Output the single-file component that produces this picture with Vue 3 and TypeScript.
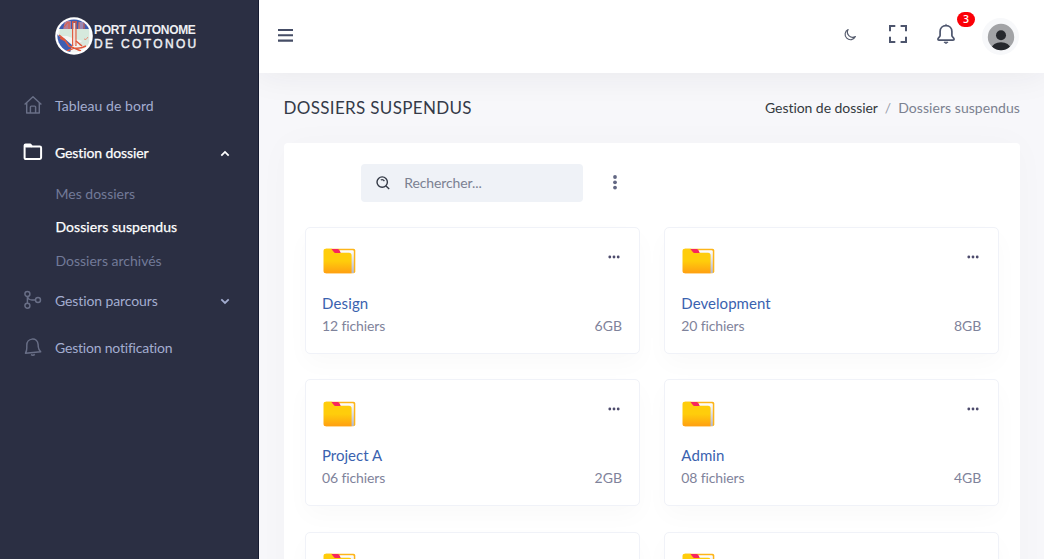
<script setup lang="ts">
interface Folder {
  name: string
  files: string
  size: string
  tone: string
}

const folders: Folder[] = [
  { name: 'Design', files: '12 fichiers', size: '6GB', tone: 'n-design' },
  { name: 'Development', files: '20 fichiers', size: '8GB', tone: 'n-dev' },
  { name: 'Project A', files: '06 fichiers', size: '2GB', tone: 'n-project' },
  { name: 'Admin', files: '08 fichiers', size: '4GB', tone: 'n-admin' },
  { name: '', files: '', size: '', tone: '' },
  { name: '', files: '', size: '', tone: '' },
]
</script>

<template>
  <div class="app">
    <aside class="sidebar">
      <div class="brand">
        <svg class="crest" width="38" height="38" viewBox="0 0 38 38">
          <defs>
            <clipPath id="crest-clip"><circle cx="19" cy="19" r="16.6" /></clipPath>
          </defs>
          <circle cx="19" cy="19" r="18.8" fill="#fff" />
          <g clip-path="url(#crest-clip)">
            <rect width="38" height="38" fill="#f3f5f3" />
            <path d="M0 0H38V12H0Z" fill="#3e5eb2" />
            <path d="M10 4H16V13H8Z" fill="#b67c96" />
            <path d="M24 5H29L28 12H23Z" fill="#9a88b2" />
            <path d="M5 12H34V22L28 24L20 22L12 19H4Z" fill="#d6e9dd" />
            <path d="M0 15L4 19L10 22L17 28L15 36H0Z" fill="#3e5eb2" />
            <path d="M24 26L34 20V29H24Z" fill="#d9e8de" />
            <path d="M9 10L13 5M14 5V12M24 5V12M29 6V12" stroke="#db6045" stroke-width="1.1" />
            <path d="M17.7 4.5V29M20.9 4.5V29M17 4.8H22" stroke="#e2583a" stroke-width="1.3" fill="none" />
            <path d="M19.3 6V28" stroke="#f4ddd6" stroke-width="1.8" />
            <path d="M4 18L9 22L14 29L19 31Q25 32 31 29M5 21L11 24M21 24L27 29M12 34L19 31L26 34" stroke="#e0573a" stroke-width="1.6" fill="none" />
            <path d="M29 22Q31 24 33 20" stroke="#e7917d" fill="none" />
          </g>
        </svg>
        <div class="brand-text">
          <span class="brand-a">PORT AUTONOME</span>
          <span class="brand-b">DE COTONOU</span>
        </div>
      </div>

      <nav>
        <a class="item">
          <svg class="nav-icon" viewBox="0 0 20 20"><path d="M1.6 9.5L10 1.8L18.4 9.5M3.7 8V17.9H16.3V8M7.4 17.6V12Q7.4 11.1 8.3 11.1H11.7Q12.6 11.1 12.6 12V17.6" /></svg>
          <span class="t-home">Tableau de bord</span>
        </a>
        <a class="item active">
          <svg class="nav-icon folder-outline" viewBox="0 0 20 20"><path d="M1.6 16V3.4Q1.6 2.5 2.6 2.5H7.2L9 4.5H16.8Q18.1 4.5 18.1 5.8V15.6Q18.1 17 16.8 17H2.9Q1.6 17 1.6 15.8Z" /><path d="M2.8 3.4H7.2L8.1 4.5H2.8Z" /></svg>
          <span class="t-folder">Gestion dossier</span>
          <svg class="caret" viewBox="0 0 12 12"><path d="M2.3 8.6L6 4.9L9.7 8.6" /></svg>
        </a>
        <div class="sub">
          <a>Mes dossiers</a>
          <a class="current">Dossiers suspendus</a>
          <a>Dossiers archivés</a>
        </div>
        <a class="item">
          <svg class="nav-icon" viewBox="0 0 20 20"><circle cx="4.4" cy="4" r="2.5" /><circle cx="4.4" cy="15.8" r="2.5" /><circle cx="15" cy="9.9" r="2.5" /><path d="M4.4 6.7V13.1M4.8 7Q5.3 9.9 9 9.9H12.3" /></svg>
          <span class="t-path">Gestion parcours</span>
          <svg class="caret" viewBox="0 0 12 12"><path d="M2.3 4.3L6 8L9.7 4.3" /></svg>
        </a>
        <a class="item">
          <svg class="nav-icon" viewBox="0 0 20 20"><path d="M2.5 16.2Q3.9 13.9 3.8 10.8V8.2C3.8 4.9 6 2.4 9 2.1C12.4 1.8 14.8 4 15.1 7.4L15.3 10Q15.6 12.9 17.7 14.8ZM8 17.7Q10 18.9 11.8 17.4" /></svg>
          <span class="t-notif">Gestion notification</span>
        </a>
      </nav>
    </aside>

    <div class="page">
      <header class="topbar">
        <svg class="burger" width="16" height="14" viewBox="0 0 16 14"><path d="M0 2H15M0 7.2H15M0 12.6H15" stroke="#454d66" stroke-width="2.1" /></svg>
        <div class="tools">
          <svg class="moon" width="14" height="14" viewBox="0 0 14 14"><path d="M5.1 1.5A5.4 5.4 0 1 0 12.4 8.6A5.3 5.3 0 0 1 5.1 1.5Z" fill="none" stroke="#555b6d" stroke-width="1.15" stroke-linejoin="round" /></svg>
          <svg class="expand" width="20" height="20" viewBox="0 0 20 20"><path d="M2 7.2V2H7.3M12.6 2H18V7.2M18 12.7V18H12.6M7.3 18H2V12.7" fill="none" stroke="#4d556d" stroke-width="2" /></svg>
          <div class="alerts">
            <svg width="20" height="22" viewBox="0 0 20 22"><path d="M10 2.7C6.4 2.7 4.1 5.2 4.1 8.5V12.5C4.1 14.2 1.9 14.6 1.9 16.2Q1.9 17.1 3 17.1H17Q18.1 17.1 18.1 16.2C18.1 14.6 15.9 14.2 15.9 12.5V8.5C15.9 5.2 13.6 2.7 10 2.7Z" fill="none" stroke="#4d556d" stroke-width="1.7" /><path d="M10 .9V3M8 19.2H12Q11.4 20.3 10 20.3T8 19.2Z" fill="#4d556d" stroke="#4d556d" stroke-width=".9" /></svg>
            <span class="badge">3</span>
          </div>
          <div class="avatar">
            <svg width="28" height="28" viewBox="0 0 28 28">
              <defs><clipPath id="avatar-clip"><circle cx="14" cy="14" r="13.2" /></clipPath></defs>
              <circle cx="14" cy="14" r="13.2" fill="#a2a3a6" />
              <g clip-path="url(#avatar-clip)" fill="#26282d"><circle cx="14" cy="12.2" r="5" /><ellipse cx="14" cy="25.2" rx="9.3" ry="6" /></g>
            </svg>
          </div>
        </div>
      </header>

      <main>
        <div class="heading">
          <h1>DOSSIERS SUSPENDUS</h1>
          <div class="crumbs"><span class="crumb-a">Gestion de dossier</span><span class="slash">/</span><span class="crumb-b">Dossiers suspendus</span></div>
        </div>

        <section class="panel">
          <div class="toolbar">
            <label class="search">
              <svg width="14" height="14" viewBox="0 0 14 14"><circle cx="6.2" cy="6.1" r="5.2" fill="none" stroke="#343a46" stroke-width="1.4" /><path d="M10 10L13.2 13M4.8 4Q6.9 2.9 8.4 5.1" fill="none" stroke="#343a46" stroke-width="1.4" /></svg>
              <span>Rechercher...</span>
            </label>
            <svg class="kebab" width="6" height="16" viewBox="0 0 6 16" fill="#626783"><circle cx="3" cy="3" r="1.9" /><circle cx="3" cy="8.3" r="1.9" /><circle cx="3" cy="13.6" r="1.9" /></svg>
          </div>

          <div class="grid">
            <article v-for="(folder, i) in folders" :key="i" class="card">
              <div class="card-top">
                <svg class="folder" width="33" height="26" viewBox="0 0 33 26">
                  <defs>
                    <linearGradient :id="'face' + i" x2="0" y2="1"><stop offset=".5" stop-color="#ffcd0b" /><stop offset="1" stop-color="#ff9f12" /></linearGradient>
                    <linearGradient :id="'paper' + i" x2="0" y2="1"><stop stop-color="#fff" /><stop offset="1" stop-color="#b4b8cc" /></linearGradient>
                  </defs>
                  <path d="M3 .7H30.5Q32.3 .7 32.3 2.5V23.5Q32.3 25.3 30.3 25.3H3Z" fill="#fdb51a" />
                  <path d="M16 2.2H29.5Q30.8 2.2 30.8 3.4V25H19Z" :fill="'url(#paper' + i + ')'" />
                  <path d="M2.5 .7H9L11.6 3.6Q12.7 4.7 14 4.7H26Q28.6 4.7 28.6 7.5V25.3H2.5Q.5 25.3 .5 23.3V2.7Q.5 .7 2.5 .7Z" :fill="'url(#face' + i + ')'" />
                  <path d="M8.4 1H14.6Q16 1 16.9 3L17.7 4.9H12.5Q11.3 4.9 10.6 3.7Z" fill="#f7255d" />
                </svg>
                <svg class="dots" width="12" height="4" viewBox="0 0 12 4" fill="#4d4b6c"><circle cx="1.8" cy="2" r="1.4" /><circle cx="6" cy="2" r="1.4" /><circle cx="10.2" cy="2" r="1.4" /></svg>
              </div>
              <h2><span :class="folder.tone">{{ folder.name }}</span></h2>
              <div class="meta"><span class="files">{{ folder.files }}</span><span>{{ folder.size }}</span></div>
            </article>
          </div>
        </section>
      </main>
    </div>
  </div>
</template>

<style>
html, body { margin: 0; background: #fff; overflow: hidden; }
</style>

<style scoped>
* { box-sizing: border-box; }
.app { display: flex; width: 1044px; height: 559px; overflow: hidden; font-family: "Lato", "Open Sans", sans-serif; font-size: 14px; font-variant-ligatures: none; background: #f7f7fa; }
svg { display: block; flex: none; }
span, a { white-space: nowrap; }

.sidebar { position: relative; z-index: 1; width: 259px; flex: none; background: #2b2f43; border-right: 1px solid #171c31; }
.brand { height: 82px; display: flex; align-items: flex-start; padding: 17px 0 0 55px; }
.brand-text { display: flex; flex-direction: column; padding: 5.5px 0 0 1px; color: #eeeff3; font: bold 12px/14px "Liberation Sans", sans-serif; }
.brand-a { letter-spacing: -.35px; line-height: 14px; }
.brand-b { font-size: 12px; font-weight: 400; -webkit-text-stroke: .45px currentColor; letter-spacing: 2.35px; line-height: 14px; }
.item { display: flex; align-items: center; height: 47px; padding: 0 27px 0 22.5px; color: #a3add0; line-height: 20px; }
.nav-icon { width: 20px; height: 20px; margin-right: 12.5px; margin-top: -2px; fill: none; stroke: #696f87; stroke-width: 1.45; stroke-linejoin: round; }
.caret { width: 12px; height: 12px; margin-left: auto; fill: none; stroke: currentColor; stroke-width: 1.8; }
.active { color: #fff; }
.folder-outline { stroke: #fff; stroke-width: 2; }
.sub { padding: 1px 0 0 55.5px; height: 101.5px; display: flex; flex-direction: column; color: #727a98; }
.sub a { height: 33.4px; line-height: 34px; }
.sub .current { color: #fff; letter-spacing: .05px; }
.active span, .current { -webkit-text-stroke: .25px currentColor; }
.t-home { letter-spacing: .06px; }
.t-folder { letter-spacing: -.1px; }
.t-path { letter-spacing: -.1px; }
.t-notif { letter-spacing: -.2px; }

.page { flex: 1; min-width: 0; }
.topbar { display: flex; justify-content: space-between; height: 73px; padding: 0 25px 0 19px; background: #fff; box-shadow: 0 0 35px rgba(40, 42, 53, .08); position: relative; }
.burger { margin-top: 28px; }
.tools { display: flex; align-items: flex-start; }
.moon { margin: 28px 31px 0 0; }
.expand { margin: 24px 28px 0 0; }
.alerts { position: relative; width: 20px; margin: 23px 26px 0 0; }
.badge { position: absolute; left: 21px; top: -11px; width: 18px; height: 15px; border-radius: 8px; background: #fb0007; color: #fff; font: 600 10.5px/15px "Open Sans", sans-serif; text-align: center; }
.avatar { width: 37px; height: 37px; margin-top: 18px; border-radius: 50%; background: #f7f8fa; display: grid; place-items: center; }

main { padding: 0 24px 0 24.5px; }
.heading { height: 70.4px; display: flex; justify-content: space-between; padding-top: 24px; line-height: 22px; }
h1 { margin: 0; font-size: 17px; font-weight: 400; line-height: 22px; color: #343a48; letter-spacing: .33px; white-space: nowrap; }
.crumbs { color: #7b8190; }
.crumb-a { color: #343a40; letter-spacing: -.06px; }
.crumb-b { letter-spacing: .06px; }
.slash { margin: 0 7px; color: #9a9eac; }
.panel { height: 480px; padding: 21px 21px 0; background: #fff; border-radius: 4px; box-shadow: 0 0 35px rgba(40, 42, 53, .025); }
.toolbar { display: flex; align-items: center; height: 38px; padding-left: 57px; }
.search { display: flex; align-items: center; width: 221.5px; height: 38px; margin-left: -.3px; padding-left: 14.5px; border-radius: 4px; background: #eff2f7; color: #7b8192; }
.search span { margin: -2.5px 0 0 14.5px; letter-spacing: -.1px; }
.kebab { margin: -2px 0 0 29.3px; }
.grid { display: grid; grid-template-columns: 335px 335px; grid-auto-rows: 127px; column-gap: 24.3px; row-gap: 25.3px; padding-top: 24.6px; }
.card { background: #fff; border: 1px solid #f0f2f8; border-radius: 5px; padding: 20.5px 16.5px 0; box-shadow: 0 10px 24px rgba(40, 42, 53, .025); }
.card-top { height: 43.2px; display: flex; justify-content: space-between; }
.folder { margin-left: .6px; }
.dots { margin: 6.5px 2.5px 0 0; }
h2 { margin: 0; height: 23px; font-size: 15px; font-weight: 400; line-height: 22px; color: #3a62af; }
.n-design { letter-spacing: .15px; }
.n-dev { letter-spacing: .05px; }
.n-admin { letter-spacing: .1px; }
.meta { display: flex; justify-content: space-between; line-height: 22px; color: #7f839b; }
.files { letter-spacing: -.12px; }
</style>
